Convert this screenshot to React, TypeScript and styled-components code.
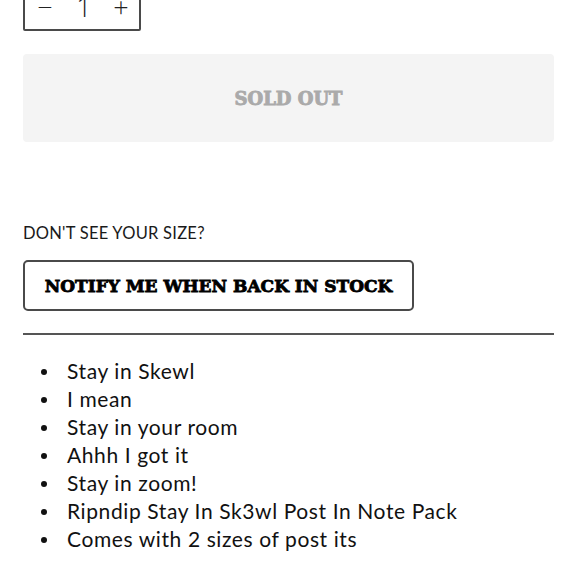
import React from "react";
import styled, { createGlobalStyle } from "styled-components";

const Global = createGlobalStyle`
  html, body { margin: 0; padding: 0; background: #ffffff; }
  body { font-family: Lato, "Noto Sans", sans-serif; color: #111; overflow: hidden; }
`;

const Page = styled.div`
  width: 580px;
  height: 580px;
  box-sizing: border-box;
  padding: 0 26px 0 23px;
  display: flex;
  flex-direction: column;
`;

const Qty = styled.div`
  margin-top: -17px;
  width: 118px;
  height: 48px;
  box-sizing: border-box;
  border: 2px solid #4a4a4a;
  border-radius: 2px;
  display: grid;
  grid-template-columns: 40px 38px 36px;
  align-items: center;
  justify-items: center;
  padding-bottom: 2px;
  font-family: "Open Sans", sans-serif;
  font-size: 27px;
  font-weight: 300;
  color: #222;
`;

const QtyBtn = styled.span`
  line-height: 1;
`;

const SoldOut = styled.button`
  margin-top: 23px;
  height: 88px;
  width: 100%;
  border: none;
  border-radius: 4px;
  background: #f4f4f4;
  color: #aaaaaa;
  font-family: "DejaVu Serif", serif;
  font-weight: 700;
  font-size: 18px;
  -webkit-text-stroke: 0.9px #aaaaaa;
  cursor: default;
  padding: 0;
`;

const Label = styled.div`
  margin-top: 81px;
  font-size: 16.5px;
  line-height: 20px;
  letter-spacing: 0.25px;
  color: #1a1a1a;
`;

const Notify = styled.button`
  margin-top: 17px;
  width: 391px;
  height: 51px;
  box-sizing: border-box;
  background: #fff;
  border: 2px solid #4a4a4a;
  border-radius: 5px;
  font-family: "DejaVu Serif", serif;
  font-weight: 700;
  font-size: 17px;
  -webkit-text-stroke: 0.8px #000;
  color: #000;
  padding: 0;
`;

const Divider = styled.hr`
  margin: 22px 0 0;
  border: none;
  height: 2px;
  background: #555;
`;

const List = styled.ul`
  margin: 22px 0 0;
  padding-left: 18px;
  list-style: none;
`;

const Item = styled.li`
  display: flex;
  align-items: center;
  font-size: 21px;
  line-height: 28px;
  letter-spacing: 0.6px;
  color: #111;

  &::before {
    content: "";
    flex: none;
    width: 6px;
    height: 6px;
    border-radius: 50%;
    background: #111;
    margin-right: 20px;
    margin-top: 1px;
  }
`;

const items = [
  "Stay in Skewl",
  "I mean",
  "Stay in your room",
  "Ahhh I got it",
  "Stay in zoom!",
  "Ripndip Stay In Sk3wl Post In Note Pack",
  "Comes with 2 sizes of post its",
];

export default function App() {
  return (
    <>
      <Global />
      <Page>
        <Qty>
          <QtyBtn>−</QtyBtn>
          <QtyBtn>1</QtyBtn>
          <QtyBtn>+</QtyBtn>
        </Qty>
        <SoldOut disabled>SOLD OUT</SoldOut>
        <Label>DON'T SEE YOUR SIZE?</Label>
        <Notify>NOTIFY ME WHEN BACK IN STOCK</Notify>
        <Divider />
        <List>
          {items.map((t) => (
            <Item key={t}>{t}</Item>
          ))}
        </List>
      </Page>
    </>
  );
}
